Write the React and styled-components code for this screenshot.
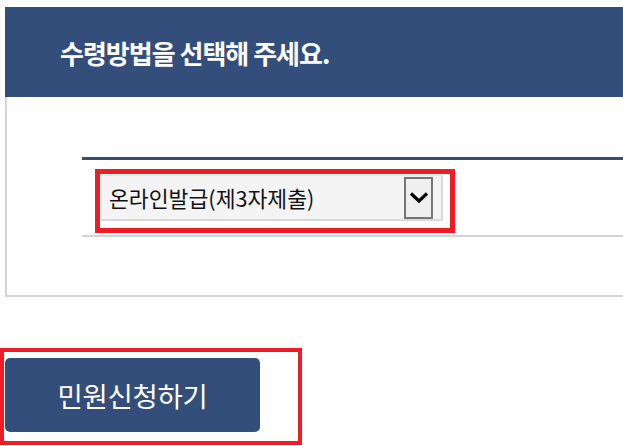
import React from "react";
import styled, { createGlobalStyle } from "styled-components";

const navy = "#344e7b";
const red = "#ee1c25";
const line = "#d4d4d4";

const GlobalStyle = createGlobalStyle`
  body {
    margin: 0;
    background: #fff;
    overflow: hidden;
    font-family: "Noto Sans CJK KR", "Noto Sans", sans-serif;
  }
`;

const Page = styled.div`
  padding-top: 7px;
`;

const Header = styled.h2`
  margin: 0 0 0 5px;
  height: 90px;
  padding-left: 55px;
  display: flex;
  align-items: center;
  background: ${navy};
  color: #fff;
  font-size: 26px;
  font-weight: 700;
  letter-spacing: -1px;
`;

const Panel = styled.div`
  margin-left: 5px;
  border-left: 2px solid ${line};
  border-bottom: 2px solid ${line};
  padding: 60px 0 58px 75px;
`;

const Table = styled.div`
  border-top: 3px solid ${navy};
  border-bottom: 2px solid ${line};
  padding: 9px 0 2px 13px;
`;

const RedFrame = styled.div`
  display: inline-flex;
  border: ${(p) => p.$w}px solid ${red};
  padding: ${(p) => p.$pad};
`;

const Select = styled.div`
  box-sizing: border-box;
  width: 342px;
  height: 46px;
  display: flex;
  align-items: center;
  padding-left: 7px;
  background: #f4f4f4;
  border: 1px solid #e4e4e4;
  border-right: 2px solid #d9d9d9;
  border-bottom: 2px solid #d9d9d9;
  font-size: 21.6px;
  color: #111;
`;

const Arrow = styled.span`
  box-sizing: border-box;
  width: 29px;
  height: 42px;
  margin-left: auto;
  margin-right: 8px;
  display: flex;
  align-items: center;
  justify-content: center;
  background: #efefef;
  border: 2px solid #767676;
`;

const Footer = styled.div`
  margin-top: 51px;
`;

const Button = styled.button`
  width: 255px;
  height: 74px;
  border: 0;
  border-radius: 5px;
  background: ${navy};
  color: #fff;
  font-family: inherit;
  font-size: 27.5px;
  letter-spacing: -0.3px;
  padding: 0;
`;

export default function App() {
  return (
    <>
      <GlobalStyle />
      <Page>
        <Header>수령방법을 선택해 주세요.</Header>
        <Panel>
          <Table>
            <RedFrame $w={5} $pad="1px 7px 7px 1px">
              <Select>
                온라인발급(제3자제출)
                <Arrow>
                  <svg width="20" height="13" viewBox="0 0 20 13">
                    <path d="M2 2.5 L10 10 L18 2.5" fill="none" stroke="#000" strokeWidth="3.2" />
                  </svg>
                </Arrow>
              </Select>
            </RedFrame>
          </Table>
        </Panel>
        <Footer>
          <RedFrame $w={4} $pad="6px 38px 9px 1px">
            <Button>민원신청하기</Button>
          </RedFrame>
        </Footer>
      </Page>
    </>
  );
}
